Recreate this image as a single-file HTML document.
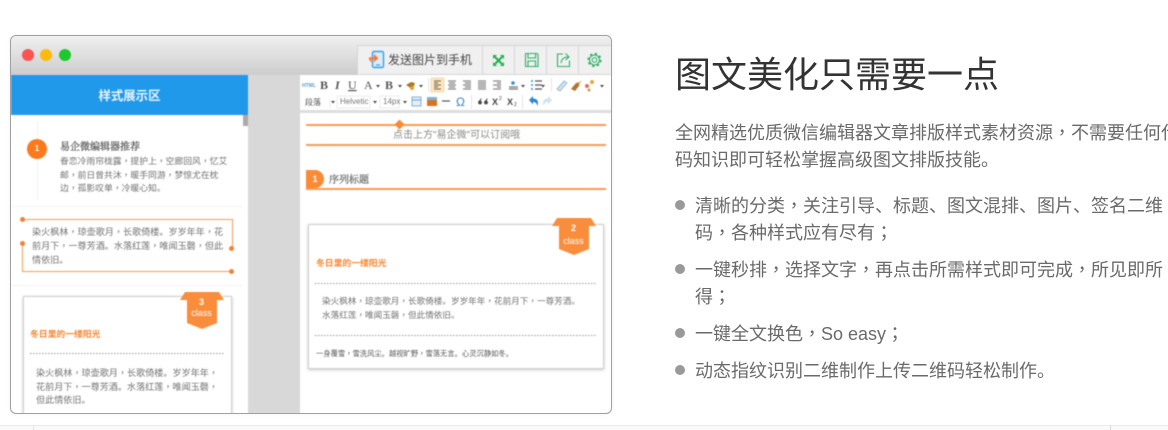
<!DOCTYPE html>
<html>
<head>
<meta charset="utf-8">
<style>
html,body{margin:0;padding:0;width:1168px;height:430px;overflow:hidden;background:#fff;}
body{position:relative;font-family:"Liberation Sans","Noto Sans CJK SC",sans-serif;}
.a{position:absolute;white-space:nowrap;}
i.c{font-style:normal;font-family:"Noto Sans CJK TC",sans-serif;}
#win{position:absolute;left:10px;top:35px;width:600px;height:377px;border:1px solid #a0a0a0;border-radius:6px;overflow:hidden;background:#fff;box-shadow:0 0 3px rgba(0,0,0,.06);}
#in{position:absolute;left:-11px;top:-36px;width:1168px;height:430px;filter:blur(.5px);}
.t{line-height:13.5px;color:#727272;white-space:nowrap;position:absolute;}
.card{position:absolute;background:#fff;border:1px solid #d0d0d0;box-shadow:0 1px 3px rgba(0,0,0,.22);}
.dot{position:absolute;height:1px;background:repeating-linear-gradient(90deg,#999 0 1.5px,transparent 1.5px 3px);}
.o{position:absolute;background:#fb9a52;}
.d{position:absolute;width:5px;height:5px;border-radius:50%;background:#f5813a;}
.ttl{position:absolute;color:#f8852f;font-weight:bold;white-space:nowrap;}
.main{position:absolute;white-space:nowrap;color:#6a6a6a;font-size:18px;line-height:27px;font-family:"Noto Sans CJK SC",sans-serif;}
.b{position:absolute;left:675px;width:10px;height:10px;border-radius:50%;background:#999;}
.st{-webkit-text-stroke:.35px currentColor;}
</style>
</head>
<body>
<div id="win"><div id="in">
  <div class="a" style="left:0;top:36px;width:1168px;height:39px;background:linear-gradient(#f0f0f0,#cdcdcd);"></div>
  <div class="a" style="left:22px;top:49px;width:12px;height:12px;border-radius:50%;background:#fb5252;"></div>
  <div class="a" style="left:40px;top:49px;width:12px;height:12px;border-radius:50%;background:#fdb90e;"></div>
  <div class="a" style="left:59px;top:49px;width:12px;height:12px;border-radius:50%;background:#1fc72f;"></div>

  <div class="a" style="left:357px;top:45px;width:260px;height:30px;background:#f0f0f0;border:1px solid #d6d6d6;box-sizing:border-box;"></div>
  <div class="a" style="left:482px;top:45px;width:1px;height:30px;background:#d6d6d6;"></div>
  <div class="a" style="left:514px;top:45px;width:1px;height:30px;background:#d6d6d6;"></div>
  <div class="a" style="left:546px;top:45px;width:1px;height:30px;background:#d6d6d6;"></div>
  <div class="a" style="left:578px;top:45px;width:1px;height:30px;background:#d6d6d6;"></div>
  <div class="a" style="left:388px;top:52px;font-size:12px;line-height:16px;color:#444;font-family:'Noto Sans CJK SC',sans-serif;">发送图片到手机</div>

  <svg class="a" style="left:368px;top:48px;" width="240" height="24" viewBox="368 48 240 24" fill="none">
    <rect x="372.5" y="51.5" width="11" height="16" rx="1.5" stroke="#3f9fe0" stroke-width="1.4" fill="#d8ecfa"/>
    <path d="M376 65h4" stroke="#3f9fe0" stroke-width="1.2"/>
    <path d="M369 59.500v-2.200h5V54l4.500 4.200-4.500 4v-3h-2.600v3.300z" fill="#f47a3a"/>
    <g stroke="#1eb050" stroke-width="2">
      <path d="M495 57l7 7M502 57l-7 7"/>
    </g>
    <path d="M493 55h4l-4 4zM504 55h-4l4 4zM493 66h4l-4-4zM504 66h-4l4-4z" fill="#1eb050"/>
    <g stroke="#32b068" stroke-width="1.100">
      <path d="M525.500 53.500h11.500l1 1v12h-12.500z"/>
      <path d="M528 53.500v4.500h7.500v-4.500M528 66.500v-5.500h7.500v5.500"/>
      <path d="M563 54h-5.500v12.500h12v-6"/>
      <path d="M561 63c.5-4 3-6 7.500-6M565.500 53.500l3.500 3.500-3.500 3"/>
      <circle cx="594.500" cy="60" r="2.300"/>
      <circle cx="594.500" cy="60" r="5"/>
      <circle cx="594.500" cy="60" r="6.200" stroke-width="1.800" stroke-dasharray="2.300 2.570"/>
    </g>
  </svg>

  <!-- left panel -->
  <div class="a" style="left:11px;top:75px;width:237px;height:40px;background:#2199ea;color:#e9f5fd;font-size:12.4px;font-weight:bold;line-height:40px;text-align:center;font-family:'Noto Sans CJK SC',sans-serif;">样式展示区</div>
  <div class="a" style="left:248px;top:75px;width:52px;height:340px;background:#d8d8d8;"></div>
  <div class="a" style="left:243px;top:115px;width:5px;height:11px;background:#aaa;"></div>
  <div class="a" style="left:37px;top:121px;width:1px;height:79px;background:#f2f2f2;"></div>
  <div class="a" style="left:27px;top:139px;width:20px;height:20px;border-radius:50%;background:#fb7a1d;color:#fff;font-size:8px;font-weight:bold;line-height:20px;text-align:center;">1</div>
  <div class="a st" style="left:60px;top:138px;font-size:10px;line-height:16px;color:#666;font-family:'Noto Serif CJK SC',serif;">易企微编辑器推荐</div>
  <div class="t" style="left:60px;top:154px;font-size:8.800px;font-family:'Noto Sans CJK SC',sans-serif;">眷恋冷雨帘栊露<i class="c">，</i>提护上<i class="c">，</i>空廊回风<i class="c">，</i>忆艾<br>邮<i class="c">，</i>前日曾共沐<i class="c">，</i>暖手同游<i class="c">，</i>梦惊尤在枕<br>边<i class="c">，</i>孤影叹单<i class="c">，</i>冷暖心知。</div>
  <div class="a" style="left:11px;top:206px;width:232px;height:1px;background:#f4f4f4;"></div>

  <div class="o" style="left:22px;top:219px;width:210px;height:1px;"></div>
  <div class="o" style="left:232px;top:219px;width:1px;height:29px;"></div>
  <div class="o" style="left:22px;top:243px;width:1px;height:29px;"></div>
  <div class="o" style="left:22px;top:271px;width:210px;height:1px;"></div>
  <div class="d" style="left:20px;top:217px;"></div>
  <div class="d" style="left:20px;top:241px;"></div>
  <div class="d" style="left:229px;top:246px;"></div>
  <div class="d" style="left:229px;top:269px;"></div>
  <div class="t" style="left:32px;top:224px;font-size:9.100px;line-height:14px;font-family:'Noto Sans CJK SC',sans-serif;">染火枫林<i class="c">，</i>琼壶歌月<i class="c">，</i>长歌倚楼。岁岁年年<i class="c">，</i>花<br>前月下<i class="c">，</i>一尊芳酒。水落红莲<i class="c">，</i>唯闻玉磬<i class="c">，</i>但此<br>情依旧。</div>
  <div class="a" style="left:11px;top:285px;width:232px;height:1px;background:#f4f4f4;"></div>

  <div class="card" style="left:23px;top:296px;width:207px;height:130px;"></div>
  <svg class="a" style="left:179px;top:291px;" width="46" height="38" viewBox="0 0 46 38"><path d="M6 1h34l5 8h-7v23l-15 6-15-6V9H1z" fill="#f98d3c"/></svg>
  <div class="a" style="left:179px;top:297px;width:45px;text-align:center;color:#fff;font-size:9px;line-height:11px;"><b>3</b><br>class</div>
  <div class="ttl" style="left:30px;top:327px;font-size:8.800px;line-height:14px;font-family:'Noto Sans CJK SC',sans-serif;">冬日里的一缕阳光</div>
  <div class="dot" style="left:30px;top:353px;width:195px;"></div>
  <div class="t" style="left:36px;top:366px;font-size:9.100px;font-family:'Noto Sans CJK SC',sans-serif;">染火枫林<i class="c">，</i>琼壶歌月<i class="c">，</i>长歌倚楼。岁岁年年<i class="c">，</i><br>花前月下<i class="c">，</i>一尊芳酒。水落红莲<i class="c">，</i>唯闻玉磬<i class="c">，</i><br>但此情依旧。</div>

  <!-- editor toolbar -->
  <div class="a" style="left:300px;top:76px;width:320px;height:34px;background:#fff;"></div>
  <div class="a" style="left:300px;top:110px;width:320px;height:3px;background:#dedede;"></div>
  <svg class="a" style="left:300px;top:76px;" width="312" height="36" viewBox="300 76 312 36" font-family="Liberation Sans" fill="#555">
    <text x="302" y="87" font-size="5" fill="#5b9bd5" font-weight="bold">HTML</text>
    <g font-family="Liberation Serif" font-size="12">
      <text x="320" y="89" font-weight="bold">B</text>
      <text x="335" y="89" font-style="italic" font-weight="bold">I</text>
      <text x="348" y="89" text-decoration="underline">U</text>
      <text x="364" y="89">A</text>
      <text x="385" y="89" font-weight="bold">B</text>
    </g>
    <path d="M376 85h4l-2 2.500zM398 85h4l-2 2.500zM419 85h4l-2 2.500zM521 85h4l-2 2.500zM541 85h4l-2 2.500zM600 85h4l-2 2.500z" fill="#444"/>
    <path d="M406 85l5-3 4 1-1 3-3 3-2-2z" fill="#a9792c"/><circle cx="412" cy="88" r="2" fill="#e6a020"/>
    <rect x="431" y="78" width="13" height="14" rx="1" fill="#fbe7c3" stroke="#f3d9a8"/>
    <g stroke="#8a8a8a" stroke-width="1.300">
      <path d="M434 81h7M434 83h4M434 85h7M434 87h4M434 89h7" stroke="#8a7a5a"/>
      <path d="M448 81h8M449 83h6M448 85h8M449 87h6M448 89h8"/>
      <path d="M463 81h8M465 83h6M463 85h8M465 87h6M463 89h8"/>
      <path d="M478 81h8M478 83h8M478 85h8M478 87h8M478 89h8"/>
      <path d="M493 81h8M497 83h4M493 85h8M497 87h4M493 89h8"/>
      <path d="M509 87h9M509 89h9" stroke="#777"/>
      <path d="M535 81h7M535 85h7M535 89h7" stroke="#555"/>
    </g>
    <circle cx="513" cy="83" r="1.800" fill="#3a8fd0"/>
    <circle cx="532" cy="81" r="1" fill="#3a8fd0"/><circle cx="532" cy="85" r="1" fill="#3a8fd0"/><circle cx="532" cy="89" r="1" fill="#3a8fd0"/>
    <path d="M428.500 78v14M551.500 78v14M471.500 95v14M522.500 95v14" stroke="#e4e4e4"/>
    <path d="M557 89l7-8 3 2-7 8z" fill="#cfe2f3" stroke="#7fa7c9" stroke-width=".7"/>
    <path d="M571 89l5-6 4-1-1 4-4 5z" fill="#b5742e"/><path d="M578 84l3-3" stroke="#e2b04a"/>
    <circle cx="587" cy="86" r="2" fill="#e0705a"/><circle cx="592" cy="82" r="2" fill="#e6a63a"/><circle cx="589" cy="90" r="1.500" fill="#c9a040"/>

    <text x="305" y="105" font-size="8" font-family="Noto Sans CJK SC">段落</text>
    <path d="M330 100v8M337 96h33v12h-33zM380 96h19v12h-19z" stroke="#ececec" fill="none"/>
    <path d="M331 101h4l-2 2.500zM373 101h4l-2 2.500zM403 101h4l-2 2.500z" fill="#444"/>
    <text x="340" y="104" font-size="8" fill="#777">Helvetic</text>
    <text x="383" y="104" font-size="8" fill="#777">14px</text>
    <rect x="412" y="97" width="9" height="9" fill="#e3eefa" stroke="#6d9fd0" stroke-width=".8"/><path d="M412 100h9" stroke="#6d9fd0"/>
    <rect x="427" y="97" width="10" height="9" fill="#d9731f"/><rect x="427" y="97" width="10" height="3" fill="#7fb4dc"/>
    <path d="M442 101h8" stroke="#555" stroke-width="1.200"/>
    <text x="456" y="106" font-size="12" fill="#3a7ec0">Ω</text>
    <circle cx="480" cy="102.500" r="1.900" fill="#444"/><path d="M478.300 102l2.500-3.500h1l-2 3.500z" fill="#444"/>
    <circle cx="486" cy="102.500" r="1.900" fill="#444"/><path d="M484.300 102l2.500-3.500h1l-2 3.500z" fill="#444"/>
    <text x="492" y="105" font-size="9" font-weight="bold" fill="#444">X</text><text x="499" y="100" font-size="5" fill="#444">2</text>
    <text x="507" y="105" font-size="9" font-weight="bold" fill="#444">X</text><text x="514" y="106" font-size="5" fill="#444">2</text>
    <path d="M529 100l4-4v2.500c4 0 6 2.500 4.500 7.500-1-3-2-4-4.500-4v2.500z" fill="#2f86cf"/>
    <path d="M552 100l-4-4v2.500c-4 0-6 2.500-4.500 7.500 1-3 2-4 4.500-4v2.500z" fill="#cfe3f1"/>
  </svg>

  <!-- editor content -->
  <div class="o" style="left:306px;top:124px;width:300px;height:2px;"></div>
  <div class="a" style="left:396px;top:121px;width:7px;height:7px;background:#f98a35;transform:rotate(45deg);"></div>
  <div class="a" style="left:393px;top:129px;font-size:10px;line-height:14px;color:#888;font-family:'Liberation Sans','Noto Sans CJK SC',sans-serif;">点击上方"易企微"可以订阅哦</div>
  <div class="o" style="left:306px;top:144px;width:300px;height:2px;"></div>

  <div class="a" style="left:306px;top:170px;width:18px;height:18px;background:#fb8a34;border-radius:0 9px 9px 0;color:#fff;font-size:9px;font-weight:bold;line-height:18px;text-align:center;">1</div>
  <div class="a st" style="left:329px;top:171px;font-size:10px;line-height:16px;color:#777;font-family:'Noto Serif CJK SC',serif;">序列标题</div>
  <div class="o" style="left:306px;top:188px;width:300px;height:2px;"></div>

  <div class="card" style="left:308px;top:224px;width:294px;height:143px;"></div>
  <svg class="a" style="left:551px;top:217px;" width="46" height="38" viewBox="0 0 46 38"><path d="M6 1h34l5 8h-7v23l-15 6-15-6V9H1z" fill="#f98d3c"/></svg>
  <div class="a" style="left:551px;top:222px;width:45px;text-align:center;color:#fff;font-size:9px;line-height:13px;"><b>2</b><br>class</div>
  <div class="ttl" style="left:316px;top:256px;font-size:8.800px;line-height:14px;font-family:'Noto Sans CJK SC',sans-serif;">冬日里的一缕阳光</div>
  <div class="dot" style="left:315px;top:283px;width:282px;"></div>
  <div class="t" style="left:322px;top:295px;font-size:8.600px;font-family:'Noto Sans CJK SC',sans-serif;">染火枫林<i class="c">，</i>琼壶歌月<i class="c">，</i>长歌倚楼。岁岁年年<i class="c">，</i>花前月下<i class="c">，</i>一尊芳酒。<br>水落红莲<i class="c">，</i>唯闻玉磬<i class="c">，</i>但此情依旧。</div>
  <div class="dot" style="left:315px;top:335px;width:282px;"></div>
  <div class="a" style="left:316px;top:349px;font-size:7.300px;line-height:11px;color:#555;font-family:'Noto Sans CJK SC',sans-serif;">一身覆雪<i class="c">，</i>雪洗风尘。越视旷野<i class="c">，</i>雪落无言。心灵沉静如冬。</div>
</div></div>

<!-- right text -->
<div class="a" style="left:675px;top:46px;font-size:36px;line-height:52px;color:#333;font-family:'Noto Sans CJK SC',sans-serif;">图文美化只需要一点</div>
<div class="main" style="left:675px;top:119px;">全网精选优质微信编辑器文章排版样式素材资源<i class="c">，</i>不需要任何代<br>码知识即可轻松掌握高级图文排版技能。</div>
<div class="b" style="top:200px;"></div>
<div class="main" style="left:695px;top:192px;">清晰的分类<i class="c">，</i>关注引导、标题、图文混排、图片、签名二维<br>码<i class="c">，</i>各种样式应有尽有<i class="c">；</i></div>
<div class="b" style="top:264px;"></div>
<div class="main" style="left:695px;top:256px;">一键秒排<i class="c">，</i>选择文字<i class="c">，</i>再点击所需样式即可完成<i class="c">，</i>所见即所<br>得<i class="c">；</i></div>
<div class="b" style="top:328px;"></div>
<div class="main" style="left:695px;top:320px;">一键全文换色<i class="c">，</i><span style="font-family:'Liberation Sans','Noto Sans CJK SC',sans-serif">So easy</span><i class="c">；</i></div>
<div class="b" style="top:365px;"></div>
<div class="main" style="left:695px;top:357px;">动态指纹识别二维制作上传二维码轻松制作。</div>

<!-- bottom strip -->
<div class="a" style="left:0;top:425px;width:1168px;height:5px;background:#fafafa;border-top:1px solid #e9e9e9;box-sizing:border-box;"></div>
<div class="a" style="left:33px;top:425px;width:1px;height:5px;background:#e6e6e6;"></div>
<div class="a" style="left:1110px;top:425px;width:1px;height:5px;background:#d8d8d8;"></div>
</body>
</html>
